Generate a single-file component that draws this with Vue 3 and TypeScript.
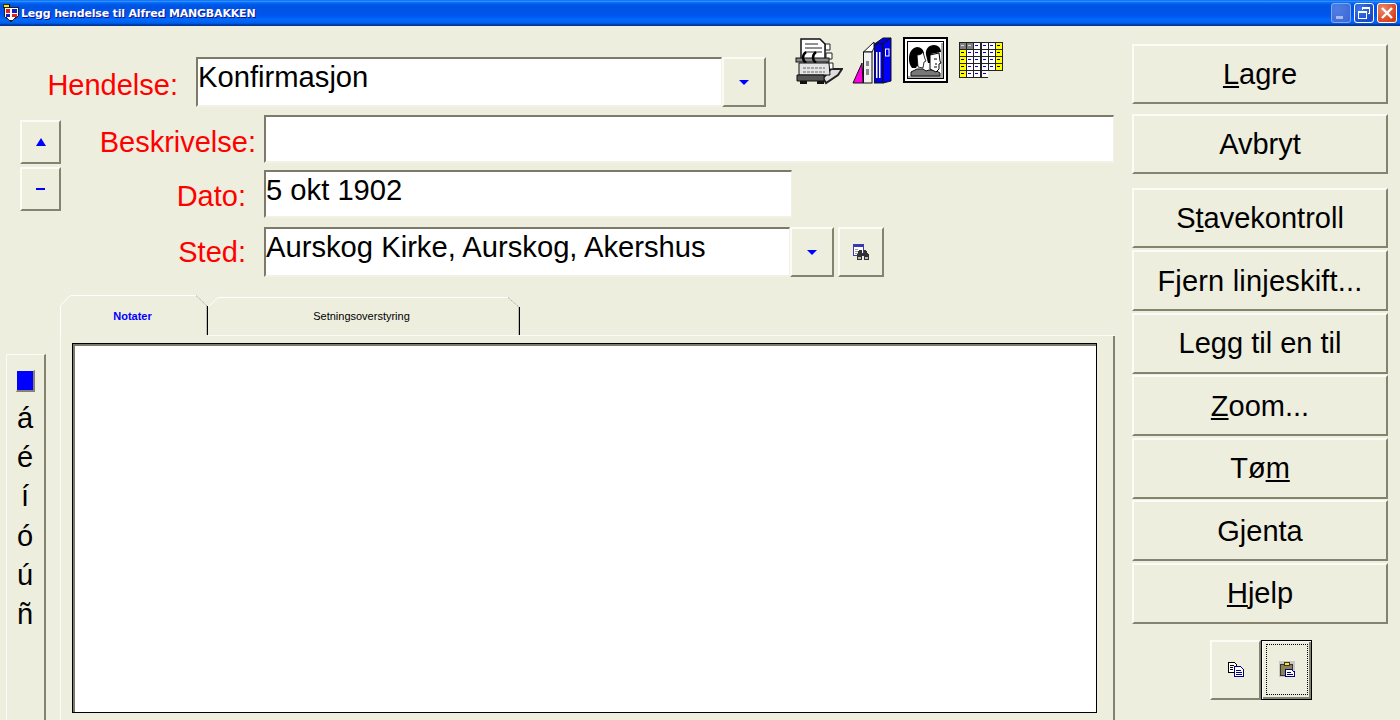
<script setup lang="ts">
const accents: string[] = ['á', 'é', 'í', 'ó', 'ú', 'ñ']
const calendar: { x: number; y: number; yellow: boolean; head: boolean }[] = []
for (let r = 0; r < 5; r++) {
  const cols = r === 4 ? 4 : 6
  for (let c = 0; c < cols; c++) {
    calendar.push({
      x: Math.round(c * 7.2),
      y: r * 7,
      yellow: (c === 0 && r > 0) || (c === 5 && r < 4),
      head: r === 0 && c < 2
    })
  }
}
</script>

<template>
  <div class="window">
    <header class="titlebar">
      <svg class="app-icon" width="16" height="18" viewBox="0 0 16 18" shape-rendering="crispEdges">
        <rect x="0" y="0" width="6" height="3" fill="#ffe600" stroke="#000" stroke-width=".8" />
        <path d="M1 3h14v9l-7 5.500-7-5.500z" fill="#fff" stroke="#222" />
        <rect x="3" y="5" width="4" height="4" fill="#e02020" />
        <rect x="9" y="5" width="5" height="4" fill="#1020c0" />
        <rect x="3" y="10" width="4" height="3" fill="#1020c0" />
        <rect x="9" y="10" width="5" height="3" fill="#e02020" />
      </svg>
      <span class="title-text">Legg hendelse til Alfred MANGBAKKEN</span>
      <div class="win-btns">
        <div class="win-btn disabled">
          <svg width="20" height="20" viewBox="0 0 20 20" shape-rendering="crispEdges"><rect x="5" y="13" width="7" height="3" fill="#a9b9ea" /></svg>
        </div>
        <div class="win-btn">
          <svg width="20" height="20" viewBox="0 0 20 20" shape-rendering="crispEdges">
            <path d="M8.500 6.500V4.500h7v6h-2" fill="none" stroke="#fff" />
            <rect x="8" y="4" width="8" height="1.600" fill="#fff" />
            <rect x="4.500" y="8.500" width="8" height="7" fill="none" stroke="#fff" />
            <rect x="4" y="8" width="9" height="2" fill="#fff" />
          </svg>
        </div>
        <div class="win-btn close">
          <svg width="20" height="20" viewBox="0 0 20 20"><path d="M5 5l10 10M15 5L5 15" stroke="#fff" stroke-width="2.400" /></svg>
        </div>
      </div>
    </header>

    <div class="body">
      <main class="left">
        <div class="row-event">
          <label class="lbl lbl-event">Hendelse:</label>
          <div class="combo combo-event">
            <div class="field grow">Konfirmasjon</div>
            <button class="raised drop"><i class="tri-down"></i></button>
          </div>
          <div class="tools">
            <svg class="tool" width="48" height="48" viewBox="0 0 48 48">
              <path d="M26 47l20-14-1-2-19 14z" fill="#999" />
              <path d="M28 41l8-9h11l-4 6-12 8z" fill="#ddd" stroke="#222" stroke-width="2" />
              <path d="M30 7h5v6h-5zM31 16h6v6h-6zM31 26h7v6h-7z" fill="#fff" stroke="#222" />
              <path d="M6 2h19l5 5v16H6z" fill="#fff" stroke="#111" stroke-width="1.500" />
              <path d="M10 7h13M10 11h17M10 15h17" stroke="#222" />
              <rect x="1" y="21" width="33" height="4" fill="#8a8a8a" stroke="#111" />
              <path d="M11 15c-4 3-4 8 0 11M21 15c-4 3-4 8 0 11" fill="none" stroke="#000" stroke-width="2.500" />
              <path d="M4 26h30l1 12H4z" fill="#e4e4e4" stroke="#111" />
              <path d="M8 31h22M8 35h22" stroke="#666" stroke-dasharray="3 1" />
              <path d="M2 38h27v6H2z" fill="#555" stroke="#111" />
              <rect x="5" y="44" width="7" height="3" fill="#111" />
              <rect x="22" y="44" width="7" height="3" fill="#111" />
            </svg>
            <svg class="tool tool-books" width="40" height="47" viewBox="0 0 40 47">
              <path d="M1 46l9-20 1 20z" fill="#ff00e0" stroke="#111" />
              <path d="M11.500 15L22 5v6l-2 4z" fill="#fff" stroke="#111" />
              <rect x="11.500" y="15" width="8.500" height="31" fill="#f2f2f2" stroke="#111" />
              <rect x="14" y="24" width="3" height="5" fill="#888" />
              <rect x="14" y="32" width="3" height="6" fill="#888" />
              <path d="M22.500 7L31 1h8l-8 6z" fill="#0000e0" stroke="#111" />
              <rect x="22.500" y="7" width="8.500" height="39" fill="#0000e0" stroke="#111" />
              <rect x="24" y="15" width="1.500" height="26" fill="#fff" />
              <rect x="27" y="15" width="1.500" height="26" fill="#fff" />
              <path d="M31 7l8-6v43l-8 2z" fill="#0000ff" stroke="#111" />
              <rect x="33.500" y="12" width="3.500" height="7" fill="none" stroke="#fff" />
            </svg>
            <svg class="tool tool-portrait" width="45" height="46" viewBox="0 0 45 46">
              <rect x="0" y="0" width="45" height="46" fill="#000" />
              <rect x="2" y="2" width="41" height="42" fill="#fff" />
              <rect x="4" y="4" width="37" height="38" fill="#000" />
              <rect x="5" y="5" width="35" height="36" fill="#fff" />
              <rect x="38" y="6" width="2" height="35" fill="#aaa" />
              <rect x="5" y="39" width="35" height="2" fill="#aaa" />
              <path d="M8 39v-4l6-3h6l3 2 3-1h6l5 3v3z" fill="#777" stroke="#111" />
              <path d="M6 22c0-7 3-11 8-12 4 0 7 3 7 7l-2 12h-5l-1 2H9c-2-3-3-5-3-9z" fill="#000" />
              <path d="M14 18c3 0 5-1 6-3l2 7 1 2-2 1-1 6-5-1z" fill="#fff" stroke="#000" stroke-width=".8" />
              <path d="M23 18c-1-6 3-10 8-10 4 0 7 3 7 7l-5 1-5 1v9h-3z" fill="#000" />
              <path d="M27 18l9-2 1 8 1 2-2 1v5l-3 3-6-3z" fill="#fff" stroke="#000" />
              <path d="M31 22h3M32 27h2M31 30h3" stroke="#000" />
            </svg>
            <svg class="tool tool-cal" width="45" height="36" viewBox="0 0 45 36" shape-rendering="crispEdges">
              <rect x="0" y="0" width="44" height="36" fill="#222" />
              <g v-for="(cell, i) in calendar" :key="i">
                <rect :x="cell.x + 1" :y="cell.y + 1" width="6" height="6" :fill="cell.head ? '#808080' : cell.yellow ? '#ffff00' : '#ffffff'" />
                <rect :x="cell.x + 2" :y="cell.y + 3" width="3" height="1" :fill="cell.head ? '#ddd' : cell.yellow ? '#000' : '#0000e0'" />
              </g>
              <rect x="29" y="29" width="16" height="7" fill="#eeeede" />
            </svg>
          </div>
        </div>

        <div class="row-middle">
          <div class="updown">
            <button class="raised step"><i class="tri-up"></i></button>
            <button class="raised step"><i class="minus"></i></button>
          </div>
          <div class="fields">
            <div class="row row-desc">
              <label class="lbl lbl-desc">Beskrivelse:</label>
              <div class="field desc-field"></div>
            </div>
            <div class="row row-date">
              <label class="lbl lbl-short">Dato:</label>
              <div class="field date-field">5 okt 1902</div>
            </div>
            <div class="row row-place">
              <label class="lbl lbl-short lbl-place">Sted:</label>
              <div class="combo combo-place">
                <div class="field grow">Aurskog Kirke, Aurskog, Akershus</div>
                <button class="raised drop"><i class="tri-down"></i></button>
              </div>
              <button class="raised find">
                <svg width="16" height="16" viewBox="0 0 16 16" shape-rendering="crispEdges">
                  <rect x=".5" y=".5" width="10" height="11" fill="#fff" stroke="#3a3ab0" />
                  <rect x="1" y="1" width="9" height="2" fill="#3a3ab0" />
                  <path d="M2 5h3M2 7h3M2 9h3" stroke="#999" />
                  <path d="M4 16v-5l2-5h3v3h2V6h2l3 5v5h-5v-4H9v4z" fill="#333" />
                  <rect x="5" y="13" width="3" height="2" fill="#bbb" />
                  <rect x="12" y="13" width="3" height="2" fill="#bbb" />
                </svg>
              </button>
            </div>
          </div>
        </div>

        <div class="row-lower">
          <aside class="accents">
            <div class="swatch"></div>
            <span v-for="ch in accents" :key="ch" class="accent">{{ ch }}</span>
          </aside>
          <section class="tabs">
            <div class="tabstrip">
              <div class="tab tab-active">
                <svg class="tab-line" width="148" height="41" viewBox="0 0 148 41">
                  <path d="M.5 41V10.500L10.500 .5H136" fill="none" stroke="#fff" />
                  <path d="M136 .5L147 11" fill="none" stroke="#999" stroke-dasharray="1 1" />
                  <path d="M147.500 11V40" fill="none" stroke="#000" stroke-width="1.400" />
                </svg>
                <span class="tab-label active-label">Notater</span>
              </div>
              <div class="tab tab-other">
                <svg class="tab-line" width="312" height="39" viewBox="0 0 312 39">
                  <path d="M0 10L10 .5H300" fill="none" stroke="#fff" />
                  <path d="M300 .5L311 10" fill="none" stroke="#999" stroke-dasharray="1 1" />
                  <path d="M311.500 10V38" fill="none" stroke="#000" stroke-width="1.400" />
                </svg>
                <span class="tab-label other-label">Setningsoverstyring</span>
              </div>
              <div class="tab-fill"></div>
            </div>
            <div class="panel">
              <div class="notes"></div>
            </div>
          </section>
        </div>
      </main>

      <aside class="actions">
        <button class="raised action tall"><span><u>L</u>agre</span></button>
        <button class="raised action tall avbryt">Avbryt</button>
        <div class="action-group">
          <button class="raised action tall"><span>S<u>t</u>avekontroll</span></button>
          <button class="raised action next fjern">Fjern linjeskift...</button>
          <button class="raised action next"><span>Leg<u>g</u> til en til</span></button>
          <button class="raised action next"><span><u>Z</u>oom...</span></button>
          <button class="raised action next"><span>Tø<u>m</u></span></button>
          <button class="raised action next">Gjenta</button>
          <button class="raised action next"><span><u>H</u>jelp</span></button>
        </div>
        <div class="clip-row">
          <button class="raised clip">
            <svg width="16" height="15" viewBox="0 0 16 15" shape-rendering="crispEdges">
              <path d="M.5.500h6l2 2v8h-8z" fill="#fff" stroke="#000" />
              <path d="M2 3h4M2 5h3M2 7h3" stroke="#000" />
              <path d="M6.500 4.500h6l3 3v7h-9z" fill="#fff" stroke="#000080" />
              <path d="M8 8h5M8 10h6M8 12h6" stroke="#000080" />
            </svg>
          </button>
          <button class="clip clip-focus">
            <span class="dots">
              <svg width="16" height="16" viewBox="0 0 16 16" shape-rendering="crispEdges">
                <rect width="16" height="16" fill="#c8c8c8" />
                <rect x="1" y="3" width="12" height="11" fill="#8a8450" stroke="#333" />
                <rect x="5" y="1" width="5" height="3" fill="#ffe600" stroke="#333" />
                <path d="M6.500 8.500h6l3 2.500v4.500h-9z" fill="#fff" stroke="#000080" />
                <path d="M8 11h4M8 13h6" stroke="#000080" />
              </svg>
            </span>
          </button>
        </div>
      </aside>
    </div>
  </div>
</template>

<style scoped>
.window {
  width: 1400px;
  height: 720px;
  overflow: hidden;
  background: #eeeede;
  display: flex;
  flex-direction: column;
  font-family: "Liberation Sans", Arial, sans-serif;
  color: #000;
}

/* title bar */
.titlebar {
  flex: none;
  height: 26px;
  display: flex;
  align-items: center;
  padding-left: 3px;
  padding-right: 3px;
  background: linear-gradient(180deg, #0058ee 0, #3593ff 4%, #288eff 6%, #127dff 8%, #036ffc 10%, #0262ee 14%, #0057e5 20%, #0054e3 24%, #0055eb 56%, #005bf5 66%, #026afe 76%, #0062ef 86%, #0052d6 92%, #0040ab 94%, #003092 100%);
  box-sizing: border-box;
}
.app-icon {
  flex: none;
  margin-right: 2px;
}
.title-text {
  color: #fff;
  font-family: "DejaVu Sans", Verdana, sans-serif;
  font-weight: 700;
  font-size: 11px;
  letter-spacing: -0.18px;
  text-shadow: 1px 1px 0 #0f1089;
  white-space: nowrap;
}
.win-btns {
  margin-left: auto;
  display: flex;
  gap: 3px;
}
.win-btn {
  width: 20px;
  height: 20px;
  box-sizing: border-box;
  border-radius: 3px;
  outline: 1px solid #fff;
  outline-offset: -1px;
  background: radial-gradient(circle at 30% 30%, #3c77ea, #1a46c4 75%, #2c5cdc);
  display: flex;
}
.win-btn.disabled {
  background: radial-gradient(circle at 30% 30%, #4d7fe6, #3a64d0);
  outline-color: #86a6ee;
}
.win-btn.close {
  background: radial-gradient(circle at 30% 30%, #ea8a68, #d8421c 70%, #c23a10);
}

/* main layout */
.body {
  flex: 1;
  display: flex;
  min-height: 0;
}
.left {
  flex: none;
  width: 1132px;
  display: flex;
  flex-direction: column;
}
.actions {
  flex: none;
  width: 256px;
  padding-top: 18px;
  display: flex;
  flex-direction: column;
  align-items: center;
}

/* beveled controls */
.raised {
  box-sizing: border-box;
  padding: 0;
  margin: 0;
  background: #eeeede;
  border-style: solid;
  border-width: 2px;
  border-color: #fcfbf6 #85826f #85826f #fcfbf6;
  border-radius: 0;
  font: inherit;
  color: inherit;
  display: flex;
  align-items: center;
  justify-content: center;
}
.field {
  box-sizing: border-box;
  background: #fff;
  border-style: solid;
  border-width: 2px 1px 2px 2px;
  border-color: #7d7a69 #f3f1e6 #f3f1e6 #7d7a69;
  font-size: 29.2px;
  line-height: 33px;
  padding: 2px 0 0 0;
  white-space: nowrap;
  overflow: hidden;
}
.grow {
  flex: 1;
}
.combo {
  display: flex;
}
.drop {
  flex: none;
  width: 44px;
}
.tri-down {
  width: 0;
  height: 0;
  border-left: 5px solid transparent;
  border-right: 5px solid transparent;
  border-top: 5px solid #0000ff;
}
.tri-up {
  width: 0;
  height: 0;
  border-left: 5px solid transparent;
  border-right: 5px solid transparent;
  border-bottom: 8px solid #0000ff;
}
.minus {
  width: 9px;
  height: 2px;
  background: #0000ff;
}

/* labels */
.lbl {
  flex: none;
  color: #ff0000;
  font-size: 29px;
  line-height: 33px;
  white-space: nowrap;
  text-align: right;
}

/* top rows */
.row-event {
  margin-top: 10px;
  display: flex;
  align-items: flex-start;
}
.lbl-event {
  width: 178px;
  margin-top: 33px;
}
.combo-event {
  width: 570px;
  height: 50px;
  margin-top: 21px;
  margin-left: 18px;
}
.tools {
  display: flex;
  align-items: flex-start;
  margin-left: 29px;
}
.tool {
  flex: none;
  display: block;
  margin-top: 1px;
}
.tool-books {
  margin-left: 9px;
}
.tool-portrait {
  margin-left: 11px;
}
.tool-cal {
  margin-left: 11px;
  margin-top: 6px;
}

.row-middle {
  display: flex;
  margin-top: 8px;
  padding-left: 20px;
}
.updown {
  flex: none;
  width: 41px;
  padding-top: 5px;
  display: flex;
  flex-direction: column;
  gap: 3px;
}
.step {
  width: 41px;
  height: 44px;
}
.fields {
  display: flex;
  flex-direction: column;
}
.row {
  display: flex;
  align-items: flex-start;
}
.row-date {
  margin-top: 7px;
}
.row-place {
  margin-top: 9px;
}
.lbl-desc {
  width: 195px;
  margin-top: 11px;
  margin-right: 8px;
}
.lbl-short {
  width: 185px;
  margin-top: 10px;
  margin-right: 18px;
}
.lbl-place {
  margin-top: 9px;
}
.desc-field {
  width: 850px;
  height: 48px;
}
.date-field {
  width: 528px;
  height: 48px;
}
.combo-place {
  width: 570px;
  height: 50px;
}
.find {
  flex: none;
  width: 46px;
  height: 50px;
  margin-left: 4px;
}

/* lower area */
.row-lower {
  margin-top: 18px;
  padding-left: 6px;
  display: flex;
  align-items: flex-start;
}
.accents {
  flex: none;
  box-sizing: border-box;
  width: 40px;
  height: 380px;
  margin-top: 59px;
  border-top: 1px solid #fcfbf6;
  border-left: 1px solid #fcfbf6;
  border-right: 2px solid #85826f;
  display: flex;
  flex-direction: column;
  align-items: center;
  padding-top: 15px;
  padding-right: 1px;
}
.swatch {
  box-sizing: border-box;
  width: 19px;
  height: 22px;
  background: #0000ff;
  border-style: solid;
  border-width: 1px 2px 2px 1px;
  border-color: #eeeede #85826f #85826f #eeeede;
  margin-bottom: 7px;
}
.accent {
  font-size: 29px;
  line-height: 39.2px;
  height: 39.2px;
}
.tabs {
  flex: none;
  width: 1055px;
  margin-left: 14px;
  display: flex;
  flex-direction: column;
}
.tabstrip {
  display: flex;
  align-items: flex-end;
  height: 41px;
}
.tab {
  position: relative;
  flex: none;
  display: flex;
  align-items: center;
  justify-content: center;
}
.tab-active {
  width: 148px;
  height: 41px;
}
.tab-other {
  width: 312px;
  height: 38px;
  border-bottom: 1px solid #fcfbf6;
  box-sizing: content-box;
}
.tab-fill {
  flex: 1;
  height: 1px;
  background: #fcfbf6;
}
.tab-line {
  position: absolute;
  left: 0;
  top: 0;
  display: block;
}
.tab-label {
  font-size: 11px;
  font-family: "Liberation Sans", Arial, sans-serif;
  white-space: nowrap;
  padding-top: 1px;
}
.other-label {
  margin-left: -5px;
  padding-top: 0;
  margin-top: -1px;
}
.active-label {
  color: #0000ff;
  font-weight: 700;
  margin-left: -3px;
}
.panel {
  box-sizing: border-box;
  height: 390px;
  border-left: 1px solid #fcfbf6;
  border-right: 2px solid #85826f;
  padding: 7px 16px 0 11px;
}
.notes {
  box-sizing: border-box;
  height: 370px;
  background: #fff;
  border: 1px solid #000;
  box-shadow: inset 2px 2px 0 #7d7a69;
}

/* right column */
.action {
  width: 256px;
  font-size: 29px;
  line-height: 33px;
  white-space: nowrap;
  padding-top: 1px;
}
.fjern {
  letter-spacing: 0.2px;
}
.tall {
  height: 60px;
}
.avbryt {
  margin-top: 10px;
}
.action-group {
  margin-top: 14px;
  display: flex;
  flex-direction: column;
}
.next {
  height: 61px;
  margin-top: 1.600px;
}
.action-group .tall + .next {
  margin-top: 2px;
}
.clip-row {
  display: flex;
  margin-top: 16px;
  margin-left: 2px;
}
.clip {
  width: 51px;
  height: 60px;
}
.clip-focus {
  box-sizing: border-box;
  padding: 2px;
  margin: 0;
  background: #eeeede;
  border-style: solid;
  border-width: 1px;
  border-color: #000;
  box-shadow: inset 1px 1px 0 #fcfbf6, inset -2px -2px 0 #85826f;
  display: flex;
}
.dots {
  flex: 1;
  margin: 1px 1px 2px 2px;
  border: 1px dotted #000;
  display: flex;
  align-items: center;
  justify-content: center;
}
</style>
